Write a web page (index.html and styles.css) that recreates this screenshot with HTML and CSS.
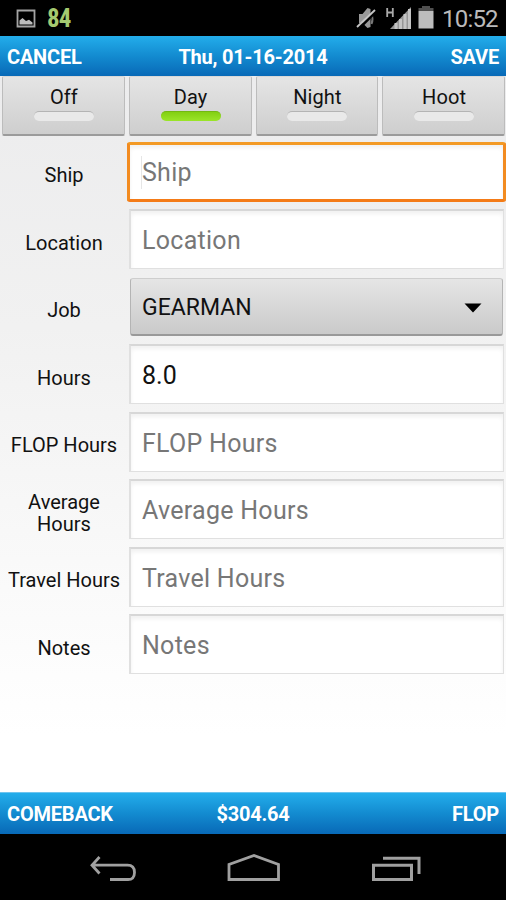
FILE: index.html
```html
<!DOCTYPE html>
<html lang="en">
<head>
<meta charset="utf-8">
<title>Shift entry</title>
<link rel="stylesheet" href="styles.css">
</head>
<body>
<div class="screen">
  <header class="status">
    <svg class="status-picture" width="20" height="20" viewBox="0 0 20 20"><path d="M1.500 1.500h17v16h-17z" fill="none" stroke="#a4a4a4" stroke-width="1.800"/><path d="M3.500 15.500v-4l3-2.500 3.500 3 3-1.200 3.500 2.700v2z" fill="#bdbdbd"/></svg>
    <span class="battery-level">84</span>
    <svg class="status-mute" width="20" height="24" viewBox="0 0 20 24"><path d="M3 7h3.500l5-6 3 1v18l-3 1-5-5H3z" fill="#999"/><path d="M15.500 7q2 5 0 10" fill="none" stroke="#777" stroke-width="2"/><path d="M2.500 22L19.500 5" stroke="#000" stroke-width="2.500"/><path d="M1 20L19 3" stroke="#c5c5c5" stroke-width="1.800"/></svg>
    <svg class="status-signal" width="26" height="24" viewBox="0 0 26 24"><path d="M1.200 2v9M6.800 2v9M1 6.500h6" fill="none" stroke="#aaa" stroke-width="1.800"/><path d="M4 23L25 1v22z" fill="#969696"/><path d="M10 23v-6M14.500 23V13M19 23V8M23.500 23V3" stroke="#c4c4c4" stroke-width="3"/></svg>
    <svg class="status-battery" width="16" height="23" viewBox="0 0 16 23"><path d="M4 0h8v2h3.500v3H.5V2H4z" fill="#505050"/><path d="M.5 5h15v17.500H.5z" fill="#bdbdbd"/></svg>
    <span class="clock">10:52</span>
  </header>
  <nav class="bar">
    <span class="bar-start cancel">CANCEL</span><span class="bar-title date">Thu, 01-16-2014</span><span class="bar-end save">SAVE</span>
  </nav>
  <main class="content">
    <div class="tabs">
      <button class="tab">Off<i class="light"></i></button>
      <button class="tab">Day<i class="light on"></i></button>
      <button class="tab">Night<i class="light"></i></button>
      <button class="tab">Hoot<i class="light"></i></button>
    </div>
    <form class="form">
      <label class="label">Ship</label><div class="field focused"><i class="caret"></i><span>Ship</span></div>
      <label class="label">Location</label><div class="field">Location</div>
      <label class="label">Job</label><div class="field select"><span>GEARMAN</span><svg width="18" height="10" viewBox="0 0 18 10"><path d="M.5.5h17L9 9.500z" fill="#000"/></svg></div>
      <label class="label">Hours</label><div class="field filled">8.0</div>
      <label class="label">FLOP Hours</label><div class="field">FLOP Hours</div>
      <label class="label">Average Hours</label><div class="field">Average Hours</div>
      <label class="label">Travel Hours</label><div class="field">Travel Hours</div>
      <label class="label">Notes</label><div class="field">Notes</div>
    </form>
  </main>
  <footer class="bar bar-bottom">
    <span class="bar-start comeback">COMEBACK</span><span class="bar-title">$304.64</span><span class="bar-end">FLOP</span>
  </footer>
  <div class="navigation">
    <svg width="48" height="28" viewBox="0 0 48 28"><path d="M11.500 1L4 9.200L11.500 17.500M4.500 9.200H39.500Q46.500 9.200 46.500 16.500T39.500 23.500H22" fill="none" stroke="#a0a0a0" stroke-width="2.800"/></svg>
    <svg width="54" height="28" viewBox="0 0 54 28"><path d="M2 23.500V8.500L27 -.5L51.500 8.500V23.500z" fill="none" stroke="#a0a0a0" stroke-width="2.800"/></svg>
    <svg width="50" height="28" viewBox="0 0 50 28"><path d="M1.500 9.200h38v14.300H1.500zM11 2.200h36V18" fill="none" stroke="#a0a0a0" stroke-width="3"/></svg>
  </div>
</div>
</body>
</html>
```
FILE: styles.css
```css
* { box-sizing: border-box; }
body { margin: 0; background: #000; font-family: Roboto, "Liberation Sans", sans-serif; color: #111; }
.screen { width: 506px; height: 900px; display: flex; flex-direction: column; overflow: hidden; }
svg { display: block; flex: none; overflow: visible; }
.status { height: 36px; flex: none; display: flex; align-items: flex-start; background: #000; }
.status-picture { margin: 9px 0 0 16px; }
.battery-level { margin: 4px 0 0 11px; width: 25px; font: 700 25px/30px "Roboto Condensed", Roboto, sans-serif; color: #a5ca70; letter-spacing: -1px; }
.status-mute { margin: 7px 0 0 auto; }
.status-signal { margin: 6px 0 0 10px; }
.status-battery { margin: 6px 0 0 6px; }
.clock { margin: 4px 0 0 8px; width: 64px; font-size: 24px; line-height: 30px; letter-spacing: -.8px; color: #bababa; white-space: nowrap; }
.bar { height: 40px; flex: none; display: grid; grid-template-columns: 1fr auto 1fr; align-items: center; padding: 1px 7px 0; background: linear-gradient(#23adeb, #138bd0 50%, #0869b7); color: #fff; font-size: 20px; font-weight: 700; line-height: 30px; letter-spacing: -.2px; white-space: nowrap; }
.bar-end { text-align: right; }
.bar-bottom { height: 42px; border-top: 1px solid #6ec4ef; }
.content { flex: 1; background: linear-gradient(#ececed, #f1f1f1 35%, #fff 92%); }
.tabs { display: grid; grid-template-columns: repeat(4, 1fr); gap: 4px; padding: 0 1px 0 2px; height: 60px; }
.tab { display: flex; flex-direction: column; align-items: center; justify-content: flex-start; padding: 6px 0 0 1px; border: 1px solid #bcbcbc; border-top-color: #d8d8d8; border-bottom: 2px solid #9b9b9b; border-radius: 2px; background: linear-gradient(#e5e5e5, #cecece); font: 400 20px/28px Roboto, sans-serif; letter-spacing: .1px; color: #111; }
.light { width: 60px; height: 10px; border-radius: 5px; background: #e9e9e9; border-top: 1px solid #b4b4b4; }
.light.on { background: linear-gradient(#83cf12, #9be529); border-top-color: #73b812; }
.form { display: grid; grid-template-columns: 128px 376px; grid-template-rows: repeat(8, 59.5px); row-gap: 8px; padding-top: 5.5px; }
.label { align-self: center; padding: 8px 4px 0; text-align: center; font-size: 20px; line-height: 22px; }
.field { margin-left: 1px; height: 60px; display: flex; align-items: center; padding: 3px 20px 0 11px; border: 1.500px solid #e0e0e0; border-left-width: 2px; border-top: 2px solid #d7d7d7; background: #fff; box-shadow: inset 0 3px 4px #f1f1f1; font-size: 25px; line-height: 32px; letter-spacing: .28px; color: #777; }
.field.focused { position: relative; margin: 0 -2px 0 -1px; padding-left: 12px; border: 3px solid #f47b17; border-top-color: #f39a25; border-left-color: #f28b20; border-right-color: #f28b20; border-radius: 3px; }
.caret { position: absolute; left: 11px; top: 11px; width: 1px; height: 33px; background: #e6e6e6; }
.field.filled { color: #111; letter-spacing: 0; }
.field.select { justify-content: space-between; margin: 1px 1px 0 2px; height: 58px; padding: 3px 20px 0 11px; border: 1px solid #b4b4b4; border-top-color: #cecece; border-bottom: 2px solid #999; border-radius: 3px; background: linear-gradient(#e5e5e5, #cacaca); box-shadow: none; color: #111; font-size: 23px; letter-spacing: 0; }
.navigation { height: 66px; flex: none; display: flex; align-items: flex-start; justify-content: center; gap: 91px; padding: 22px 0 0 4px; background: #000; }
```
